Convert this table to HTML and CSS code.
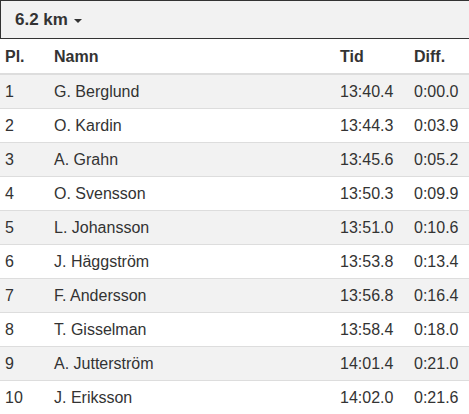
FILE: index.html
```html
<!DOCTYPE html>
<html lang="sv">
<head>
    <meta charset="UTF-8">
    <meta name="viewport" content="width=device-width, initial-scale=1.0">
    <title>Resultat 6.2 km</title>
    <link rel="stylesheet" href="styles.css">
</head>
<body>
    <div class="results">
        <div class="leg-picker">
            <span class="leg-name">6.2 km</span>
            <span class="caret"></span>
        </div>

        <table class="result-table">
            <thead>
                <tr>
                    <th class="col-place">Pl.</th>
                    <th class="col-name">Namn</th>
                    <th class="col-time">Tid</th>
                    <th class="col-diff">Diff.</th>
                </tr>
            </thead>
            <tbody>
                <tr><td>1</td><td>G. Berglund</td><td>13:40.4</td><td>0:00.0</td></tr>
                <tr><td>2</td><td>O. Kardin</td><td>13:44.3</td><td>0:03.9</td></tr>
                <tr><td>3</td><td>A. Grahn</td><td>13:45.6</td><td>0:05.2</td></tr>
                <tr><td>4</td><td>O. Svensson</td><td>13:50.3</td><td>0:09.9</td></tr>
                <tr><td>5</td><td>L. Johansson</td><td>13:51.0</td><td>0:10.6</td></tr>
                <tr><td>6</td><td>J. Häggström</td><td>13:53.8</td><td>0:13.4</td></tr>
                <tr><td>7</td><td>F. Andersson</td><td>13:56.8</td><td>0:16.4</td></tr>
                <tr><td>8</td><td>T. Gisselman</td><td>13:58.4</td><td>0:18.0</td></tr>
                <tr><td>9</td><td>A. Jutterström</td><td>14:01.4</td><td>0:21.0</td></tr>
                <tr><td>10</td><td>J. Eriksson</td><td>14:02.0</td><td>0:21.6</td></tr>
            </tbody>
        </table>
    </div>
</body>
</html>
```

FILE: styles.css
```css
* {
    margin: 0;
    padding: 0;
    box-sizing: border-box;
}

body {
    font-family: "Liberation Sans", Arial, sans-serif;
    font-size: 16px;
    color: #333;
    background: #fff;
    overflow: hidden;
}

.results {
    width: 469px;
}

.leg-picker {
    display: flex;
    align-items: center;
    gap: 6px;
    height: 39px;
    padding-left: 14px;
    background: #f2f2f2;
    border: 1px solid #333;
    border-right: none;
}

.leg-name {
    font-weight: bold;
    font-size: 17px;
    color: #333;
}

.caret {
    width: 0;
    height: 0;
    margin-top: 2px;
    border-top: 4px solid #333;
    border-left: 4px solid transparent;
    border-right: 4px solid transparent;
}

.result-table {
    width: 100%;
    border-collapse: collapse;
    table-layout: fixed;
}

.result-table th,
.result-table td {
    text-align: left;
    padding: 7px 5px;
    line-height: 19px;
    white-space: nowrap;
}

.result-table th {
    font-weight: bold;
    padding-top: 8px;
    border-bottom: 2px solid #ddd;
}

.result-table td {
    border-top: 1px solid #ddd;
}

.result-table tbody tr:nth-child(odd) {
    background: #f2f2f2;
}

.col-place {
    width: 49px;
}

.col-time {
    width: 74px;
}

.col-diff {
    width: 60px;
}
```
